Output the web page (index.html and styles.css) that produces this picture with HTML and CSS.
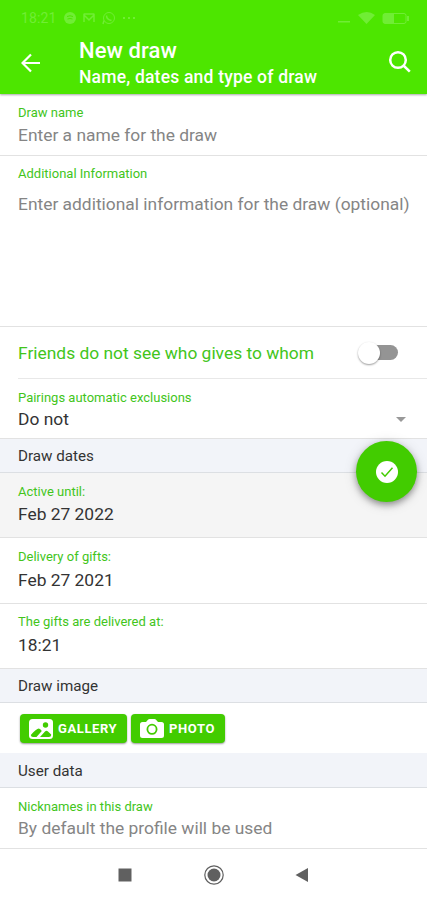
FILE: index.html
```html
<!DOCTYPE html>
<html lang="en">
<head>
<meta charset="utf-8">
<title>New draw</title>
<link rel="stylesheet" href="styles.css">
</head>
<body>
<header class="header">
  <div class="status">
    <span class="clock">18:21</span>
    <svg class="status-apps" width="76" height="16" viewBox="0 0 76 16" fill="none" stroke="currentColor">
      <circle cx="8" cy="8" r="6" fill="currentColor" stroke="none"/>
      <path d="M5 6.500q3-1.500 6 0M5.500 9q2.500-1 5 0" stroke="#4de600"/>
      <path d="M22 12V5l5 5 5-5v7M22 4h10" stroke-width="1.500"/>
      <circle cx="47" cy="8" r="5.500"/><path d="M41 14l1-3.500M44.500 5.500q0 4 5 5" stroke-width="1.500"/>
      <path d="M61 8h2M66 8h2M71 8h2" stroke-width="2"/>
    </svg>
    <svg class="status-signal" width="74" height="16" viewBox="0 0 74 16" fill="currentColor">
      <path d="M1 11h12v1.500H1zM21 5q9-6 17 0l-8.500 9z"/>
      <rect x="46" y="3.500" width="23" height="10" rx="2" fill="none" stroke="currentColor"/>
      <rect x="46" y="4" width="11" height="9"/><path d="M70 6h2v5h-2z"/>
    </svg>
  </div>
  <div class="toolbar">
    <svg class="back" width="20" height="20" viewBox="0 0 20 20" fill="none" stroke="#fff" stroke-width="2.200"><path d="M19 10H2M10 1.500L1.500 10l8.500 8.500"/></svg>
    <div class="titles">
      <h1>New draw</h1>
      <h2>Name, dates and type of draw</h2>
    </div>
    <svg class="search" width="24" height="24" viewBox="0 0 24 24" fill="none" stroke="#fff" stroke-width="2.500"><circle cx="10" cy="10" r="7.800"/><path d="M15.500 15.500l6.300 6.200"/></svg>
  </div>
</header>
<main>
  <section class="field name">
    <div class="label">Draw name</div>
    <div class="value hint">Enter a name for the draw</div>
  </section>
  <section class="field info">
    <div class="label">Additional Information</div>
    <div class="value hint">Enter additional information for the draw (optional)</div>
  </section>
  <section class="toggle-row">
    <span class="toggle-text">Friends do not see who gives to whom</span>
    <span class="switch"><span class="thumb"></span></span>
  </section>
  <section class="field pairings">
    <div class="label">Pairings automatic exclusions</div>
    <div class="value select"><span>Do not</span><span class="caret"></span></div>
  </section>
  <div class="band dates">
    <span>Draw dates</span>
    <button class="fab" aria-label="Confirm">
      <svg width="22" height="22" viewBox="0 0 22 22"><circle cx="11" cy="11" r="11" fill="#fff"/><path d="M5.500 11.500l3.500 3.700 7.500-8.400" fill="none" stroke="#42cc00" stroke-width="1.500"/></svg>
    </button>
  </div>
  <section class="field date active">
    <div class="label">Active until:</div>
    <div class="value">Feb 27 2022</div>
  </section>
  <section class="field date delivery">
    <div class="label">Delivery of gifts:</div>
    <div class="value">Feb 27 2021</div>
  </section>
  <section class="field date time">
    <div class="label">The gifts are delivered at:</div>
    <div class="value">18:21</div>
  </section>
  <div class="band image"><span>Draw image</span></div>
  <section class="buttons">
    <button class="btn gallery">
      <svg width="24" height="20" viewBox="0 0 24 20"><rect width="24" height="20" rx="3.500" fill="#fff"/><path d="M1.800 16q5.500-6.500 8-6.500 1.500 0 3 2.500L7.500 18H4q-2 0-2.200-2zM11 18l5-5.500q1.500-1.300 3 0l3.200 3q0 2.500-2.500 2.500z" fill="#42cc00"/><circle cx="16.500" cy="6" r="2.700" fill="#42cc00"/></svg>
      <span>GALLERY</span>
    </button>
    <button class="btn photo">
      <svg width="24" height="19" viewBox="0 0 24 19"><path d="M2.500 3H6l2-2.300Q8.500 0 9.500 0h5q1 0 1.500.7L18 3h3.500Q24 3 24 5.500v11q0 2.500-2.500 2.500h-19Q0 19 0 16.500v-11Q0 3 2.500 3z" fill="#fff"/><circle cx="12" cy="10.300" r="4.600" fill="none" stroke="#42cc00" stroke-width="1.800"/></svg>
      <span>PHOTO</span>
    </button>
  </section>
  <div class="band user"><span>User data</span></div>
  <section class="field nick">
    <div class="label">Nicknames in this draw</div>
    <div class="value hint">By default the profile will be used</div>
  </section>
</main>
<nav class="nav">
  <svg width="14" height="14" viewBox="0 0 14 14"><path d="M.5.500h13v13H.5z" fill="#606060"/></svg>
  <svg width="20" height="20" viewBox="0 0 20 20"><circle cx="10" cy="10" r="9.200" fill="none" stroke="#606060" stroke-width="1.200"/><circle cx="10" cy="10" r="6.500" fill="#606060"/></svg>
  <svg width="14" height="14" viewBox="0 0 14 14"><path d="M13 0v14L.5 7z" fill="#606060"/></svg>
</nav>
</body>
</html>
```
FILE: styles.css
```css
* { box-sizing: border-box; }
body {
  margin: 0;
  width: 427px;
  height: 900px;
  overflow: hidden;
  background: #fff;
  color: #333;
  font-family: Roboto, "Liberation Sans", sans-serif;
}
svg { display: block; flex: none; }
.header {
  height: 94px;
  background: #4de600;
  color: #fff;
  box-shadow: 0 1px 2px rgba(0, 0, 0, .35);
  position: relative;
}
.status {
  display: flex;
  align-items: center;
  height: 36px;
  padding: 0 16px 0 21px;
  color: #70ed35;
}
.clock { width: 41px; font-size: 14px; letter-spacing: .1px; }
.status-signal { margin-left: auto; }
.toolbar { display: flex; height: 58px; padding: 0 15px 0 21px; }
.back { margin-top: 17px; }
.titles { margin-left: 38px; flex: 1; white-space: nowrap; }
h1, h2 { margin: 0; font-weight: 500; }
h1 { font-size: 22px; line-height: 29px; letter-spacing: .1px; }
h2 { font-size: 17.500px; line-height: 24px; letter-spacing: .2px; }
.search { margin-top: 14px; }
.field { padding: 11px 18px 0; border-bottom: 1px solid #e2e2e2; }
.label { color: #42c51b; font-size: 13px; line-height: 16px; white-space: nowrap; }
.value { margin-top: 3px; font-size: 17.400px; line-height: 22px; white-space: nowrap; }
.hint { color: #858585; }
.name { height: 62px; }
.info { height: 171px; padding-top: 10px; }
.info .value { margin-top: 11px; }
.toggle-row {
  display: flex;
  align-items: center;
  justify-content: space-between;
  height: 52px;
  margin-left: 18px;
  padding-right: 29px;
  border-bottom: 1px solid #e8e8e8;
}
.toggle-text { color: #42c51b; font-size: 17.400px; }
.switch {
  display: flex;
  align-items: center;
  width: 40px;
  height: 15px;
  background: linear-gradient(90deg, transparent 12px, #949494 12px);
  border-radius: 8px;
}
.thumb {
  width: 22px;
  height: 22px;
  flex: none;
  border-radius: 50%;
  background: #fff;
  box-shadow: 0 1px 2px rgba(0, 0, 0, .4);
}
.pairings { height: 60px; }
.select { display: flex; align-items: center; justify-content: space-between; }
.pairings .value { margin-top: 2px; }
.caret { margin-right: 3px; border: 5px solid transparent; border-top-color: #999; border-bottom: 0; }
.band {
  display: flex;
  align-items: center;
  height: 34px;
  padding: 0 18px;
  background: #f2f4f9;
  border-bottom: 1px solid #dcdfe3;
  font-size: 15.200px;
}
.dates { position: relative; }
.fab {
  position: absolute;
  top: 2px;
  right: 10px;
  width: 61px;
  height: 61px;
  padding: 0;
  display: grid;
  place-items: center;
  border: 0;
  border-radius: 50%;
  background: #42cc00;
  box-shadow: 0 3px 6px rgba(0, 0, 0, .35), 0 2px 14px rgba(0, 0, 0, .14);
}
.active { height: 65px; background: #f5f5f5; }
.delivery { height: 66px; }
.delivery .value { margin-top: 4px; }
.time { height: 65px; padding-top: 10px; }
.time .value { margin-top: 4px; }
.buttons { display: flex; gap: 4px; height: 50px; padding: 11px 20px 0; }
.btn {
  display: flex;
  align-items: center;
  height: 29px;
  padding: 0 0 0 9px;
  border: 0;
  border-radius: 4px;
  background: #42cc00;
  color: #fff;
  font: 700 13px Roboto, "Liberation Sans", sans-serif;
  letter-spacing: .6px;
  box-shadow: 0 1px 2px rgba(0, 0, 0, .4);
}
.btn span { margin-left: 5px; }
.gallery { width: 107px; }
.photo { width: 94px; }
.user { height: 35px; padding-top: 1px; }
.nick { height: 61px; }
.nick .value { margin-top: 2px; }
.nav {
  display: grid;
  grid-template-columns: 14px 20px 14px;
  column-gap: 72px;
  align-items: center;
  height: 51px;
  padding-left: 118px;
}
.nav svg:last-child { margin-left: -1px; }
```
